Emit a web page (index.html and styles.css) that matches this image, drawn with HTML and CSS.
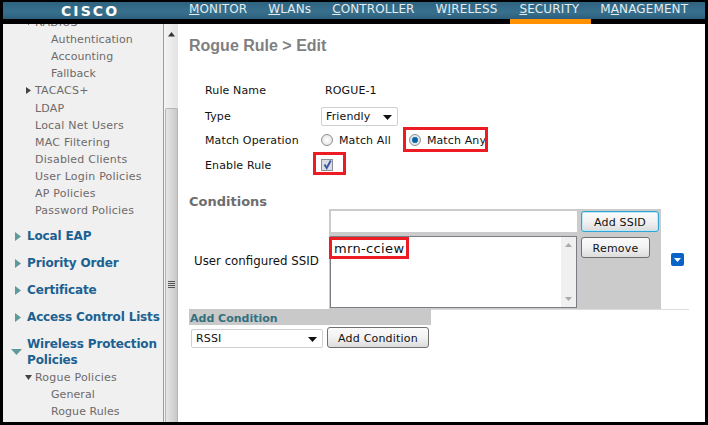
FILE: index.html
```html
<!DOCTYPE html>
<html>
<head>
<meta charset="utf-8">
<title>Rogue Rule</title>
<link rel="stylesheet" href="styles.css">
</head>
<body>
<div class="frame">
  <header class="topbar">
    <div class="logo">CISCO</div>
    <nav class="nav">
      <a class="nav-item"><u>M</u>ONITOR</a>
      <a class="nav-item"><u>W</u>LANs</a>
      <a class="nav-item"><u>C</u>ONTROLLER</a>
      <a class="nav-item wide">W<u>I</u>RELESS</a>
      <a class="nav-item active"><u>S</u>ECURITY</a>
      <a class="nav-item">M<u>A</u>NAGEMENT</a>
    </nav>
  </header>
  <div class="tabline"><span class="tab-mark"></span></div>
  <div class="body">
    <aside class="sidebar">
      <div class="side-list">
        <div class="row l2 clip"><svg class="tri-s" width="9" height="9" viewBox="0 0 9 9"><path d="M1 2h7L4.500 7z" fill="#444"/></svg>RADIUS</div>
        <div class="row l3">Authentication</div>
        <div class="row l3">Accounting</div>
        <div class="row l3">Fallback</div>
        <div class="row l2"><svg class="tri-s" width="9" height="9" viewBox="0 0 9 9"><path d="M2 1v7l5-3.500z" fill="#444"/></svg>TACACS+</div>
        <div class="row l2 sub">LDAP</div>
        <div class="row l2">Local Net Users</div>
        <div class="row l2">MAC Filtering</div>
        <div class="row l2">Disabled Clients</div>
        <div class="row l2">User Login Policies</div>
        <div class="row l2">AP Policies</div>
        <div class="row l2">Password Policies</div>
        <div class="head first"><svg class="tri" width="8" height="11" viewBox="0 0 8 11"><path d="M1 1v9l6-4.500z" fill="#5f9a9a"/></svg>Local EAP</div>
        <div class="head"><svg class="tri" width="8" height="11" viewBox="0 0 8 11"><path d="M1 1v9l6-4.500z" fill="#5f9a9a"/></svg>Priority Order</div>
        <div class="head"><svg class="tri" width="8" height="11" viewBox="0 0 8 11"><path d="M1 1v9l6-4.500z" fill="#5f9a9a"/></svg>Certificate</div>
        <div class="head"><svg class="tri" width="8" height="11" viewBox="0 0 8 11"><path d="M1 1v9l6-4.500z" fill="#5f9a9a"/></svg>Access Control Lists</div>
        <div class="head open"><svg class="tri-open" width="11" height="8" viewBox="0 0 11 8"><path d="M0 1h11L5.500 7z" fill="#5f9a9a"/></svg>Wireless Protection Policies</div>
        <div class="row l2 sub"><svg class="tri-s" width="9" height="9" viewBox="0 0 9 9"><path d="M1 2h7L4.500 7z" fill="#444"/></svg>Rogue Policies</div>
        <div class="row l3">General</div>
        <div class="row l3">Rogue Rules</div>
      </div>
    </aside>
    <div class="scrollbar">
      <svg class="arrow-up" width="7" height="5" viewBox="0 0 7 5"><path d="M0 4.500h7L3.500 0z" fill="#333"/></svg>
      <div class="thumb">
        <div class="grip"></div>
      </div>
    </div>
    <main class="main">
      <h1 class="title">Rogue Rule &gt; Edit</h1>
      <div class="form">
        <div class="f-row r1"><span class="f-label">Rule Name</span><span class="f-val">ROGUE-1</span></div>
        <div class="f-row r2"><span class="f-label">Type</span>
          <span class="select sel-type">Friendly<svg width="9" height="5" viewBox="0 0 9 5"><path d="M0 0h9L4.500 5z" fill="#111"/></svg></span>
        </div>
        <div class="f-row r3"><span class="f-label">Match Operation</span>
          <span class="radio"></span><span class="opt">Match All</span>
          <span class="radio on"></span><span class="opt">Match Any</span>
        </div>
        <div class="f-row r4"><span class="f-label">Enable Rule</span>
          <span class="check"><svg width="11" height="11" viewBox="0 0 11 11"><path d="M2.500 5.500l2.200 3.500L8.800 1.500" fill="none" stroke="#3b5aa8" stroke-width="2"/></svg></span>
        </div>
      </div>
      <h2 class="section">Conditions</h2>
      <div class="cond">
        <div class="cond-label">User configured SSID</div>
        <div class="cond-box">
          <div class="cond-fields">
            <div class="input"></div>
            <div class="textarea">
              <div class="ta-text">mrn-cciew</div>
              <div class="ta-scroll">
                <svg width="7" height="4" viewBox="0 0 7 4"><path d="M0 4h7L3.500 0z" fill="#aaa"/></svg>
                <svg width="7" height="4" viewBox="0 0 7 4"><path d="M0 0h7L3.500 4z" fill="#aaa"/></svg>
              </div>
            </div>
          </div>
          <div class="cond-btns">
            <button class="btn focus">Add SSID</button>
            <button class="btn remove">Remove</button>
          </div>
        </div>
        <span class="blue"><svg width="7" height="4" viewBox="0 0 7 4"><path d="M0 0h7L3.500 4z" fill="#fff"/></svg></span>
      </div>
      <div class="rule"></div>
      <div class="add-head">Add Condition</div>
      <div class="add-row">
        <span class="select sel-add">RSSI<svg width="9" height="5" viewBox="0 0 9 5"><path d="M0 0h9L4.500 5z" fill="#111"/></svg></span>
        <button class="btn btn-add">Add Condition</button>
      </div>
      <div class="mark m-any"></div>
      <div class="mark m-check"></div>
      <div class="mark m-ssid"></div>
    </main>
  </div>
</div>
</body>
</html>
```

FILE: styles.css
```css
html, body { margin: 0; padding: 0; background: #000; }
body { width: 708px; height: 425px; overflow: hidden; font-family: "DejaVu Sans", Verdana, sans-serif; font-size: 11px; color: #111; }
.frame { box-sizing: border-box; width: 708px; height: 425px; padding: 2px 3px 3px 3px; display: flex; flex-direction: column; background: #000; }

.topbar { height: 17px; flex: none; background: linear-gradient(#2f6380, #37708d 60%, #2c5f7c); display: flex; color: #e4edf2; overflow: hidden; }
.logo { width: 186px; flex: none; padding-left: 58px; box-sizing: border-box; font: bold 14px/18px "DejaVu Sans", sans-serif; letter-spacing: 2.1px; color: #fff; }
.nav { display: flex; }
.nav-item { font-size: 12px; line-height: 15px; letter-spacing: .12px; color: #e4edf2; margin-right: 21px; white-space: nowrap; }
.nav-item.wide { margin-right: 22px; }
.nav-item.active { margin-right: 21px; }
.tabline { height: 5px; flex: none; position: relative; }
.tab-mark { position: absolute; left: 507px; top: 0; width: 81px; height: 5px; background: #ff9000; }

.body { flex: 1; display: flex; min-height: 0; background: #fff; }
.sidebar { width: 160px; flex: none; background: #f0f0f0; overflow: hidden; border-right: 1px solid #9c9c9c; box-sizing: content-box; }
.side-list { margin-top: -10px; }
.row { height: 17px; line-height: 17px; font-size: 11px; color: #6e6a6a; white-space: nowrap; position: relative; }
.l2 { padding-left: 32px; letter-spacing: .22px; }
.l3 { padding-left: 48px; letter-spacing: .08px; }
.tri-s { position: absolute; left: 21px; top: 4px; }
.head { position: relative; margin-top: 11px; padding-left: 24px; font-size: 12px; font-weight: bold; line-height: 16px; letter-spacing: -.15px; color: #1c6191; width: 136px; }
.head.first { margin-top: 9px; }
.tri { position: absolute; left: 11px; top: 3px; }
.tri-open { position: absolute; left: 8px; top: 12px; }
.sub { margin-top: 1px; }

.scrollbar { width: 14px; flex: none; background: linear-gradient(90deg, #f4f4f4, #e3e3e3); position: relative; display: flex; flex-direction: column; align-items: center; }
.arrow-up { margin-top: 8px; }
.thumb { margin-top: 71px; width: 13px; flex: 1; box-sizing: border-box; background: linear-gradient(90deg, #e6e6e6, #d4d4d4 60%, #c8c8c8); border: 1px solid #b5b5b5; border-bottom: 0; border-radius: 2px 2px 0 0; display: flex; justify-content: center; padding-top: 172px; }
.grip { width: 7px; height: 7px; background: repeating-linear-gradient(#555 0 1px, transparent 1px 2px); }

.main { flex: 1; position: relative; background: #fff; padding-left: 11px; min-width: 0; box-sizing: border-box; }
.title { margin: 13px 0 0; font: bold 16px/18px "Liberation Sans", Arial, sans-serif; color: #7f7f7f; }
.form { margin-top: 27px; margin-left: 16px; letter-spacing: .13px; }
.f-row { display: flex; align-items: center; white-space: nowrap; }
.f-label { width: 120px; flex: none; }
.r1 { height: 17px; }
.r2 { height: 24px; margin-top: 5px; }
.r3 { height: 18px; margin-top: 3px; }
.r4 { height: 20px; margin-top: 6px; }
.select { position: relative; box-sizing: border-box; display: inline-flex; align-items: center; height: 19px; background: #fff; border: 1px solid #cfcfd6; border-radius: 2px; padding-left: 4px; }
.select svg { position: absolute; right: 5px; top: 7px; }
.sel-type { width: 77px; margin-left: -4px; }
.sel-add { width: 132px; letter-spacing: .15px; }
.radio { box-sizing: border-box; width: 12px; height: 12px; border-radius: 50%; border: 1px solid #8f8f8f; background: radial-gradient(#fff, #ddd); margin-left: -4px; }
.radio.on { background: radial-gradient(#0f5f9f 0 2px, #2f8fc8 3px, #dfe6ea 3.500px); margin-left: 18px; }
.opt { margin-left: 6px; }
.check { box-sizing: border-box; width: 12px; height: 12px; border: 1px solid #8e8f96; background: #dcdde4; margin-left: -4px; display: block; }
.check svg { display: block; margin: -1px 0 0 0; }
.section { margin: 19px 0 0; font: bold 13px/15px "DejaVu Sans", sans-serif; color: #6d6d6d; }
.cond { display: flex; align-items: flex-start; position: relative; }
.cond-label { width: 140px; flex: none; padding: 45px 0 0 5px; box-sizing: border-box; line-height: 14px; font-size: 11.800px; white-space: nowrap; }
.cond-box { width: 332px; height: 100px; box-sizing: border-box; background: #cbcbcb; display: flex; padding: 2px 0 0 1px; gap: 4px; }
.cond-fields { width: 247px; flex: none; }
.input { height: 21px; margin-left: 1px; background: #fff; }
.textarea { box-sizing: border-box; height: 72px; margin-top: 4px; background: #fff; border: 1px solid #7c7c85; display: flex; justify-content: space-between; }
.ta-text { font-size: 13px; line-height: 18px; padding: 3px 0 0 3px; letter-spacing: .35px; color: #111; }
.ta-scroll { width: 15px; background: #f0f0f0; display: flex; flex-direction: column; align-items: center; justify-content: space-between; padding: 6px 0 6px; box-sizing: border-box; }
.cond-btns { display: flex; flex-direction: column; align-items: flex-start; gap: 5px; }
.btn { box-sizing: border-box; height: 21px; padding: 1px 0 0; font: 11px "DejaVu Sans", sans-serif; letter-spacing: .2px; color: #111; background: linear-gradient(#fbfbfb, #f2f2f2 50%, #dcdcdc); border: 1px solid #707070; border-radius: 3px; text-align: center; }
.btn.focus { width: 78px; border: 1px solid #2ea7d8; box-shadow: inset 0 0 0 1px #bfe6f5; }
.btn.remove { width: 69px; }
.blue { width: 13px; height: 13px; margin: 44px 0 0 10px; background: #0a63c8; border-radius: 2px; display: flex; align-items: center; justify-content: center; }
.rule { height: 1px; background: #dcdcdc; width: 500px; }
.add-head { width: 242px; height: 16px; background: #c9c9c9; font: bold 11px/19px "DejaVu Sans", sans-serif; color: #33707f; margin-top: -1px; padding-left: 1px; box-sizing: border-box; overflow: visible; }
.add-row { display: flex; align-items: flex-end; margin: 2px 0 0 2px; gap: 4px; }
.btn-add { width: 102px; }
.mark { position: absolute; box-sizing: border-box; border: 3px solid #ed1c24; }
.m-any { left: 225px; top: 103px; width: 85px; height: 25px; }
.m-check { left: 135px; top: 128px; width: 33px; height: 23px; }
.m-ssid { left: 151px; top: 213px; width: 80px; height: 22px; }
```
